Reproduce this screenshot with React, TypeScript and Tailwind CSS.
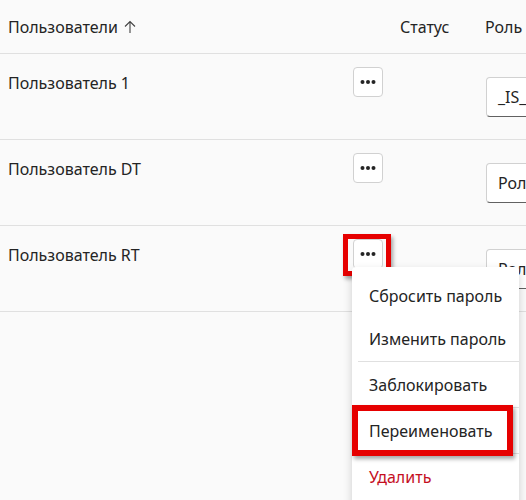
import React from "react";

const users = [
  { name: "Пользователь 1", role: "_IS_ADMIN" },
  { name: "Пользователь DT", role: "Роль DT" },
  { name: "Пользователь RT", role: "Роль RT" },
];

function Dots() {
  return (
    <svg width="16" height="6" viewBox="0 0 16 6" fill="#242424">
      <circle cx="2.5" cy="3" r="2" />
      <circle cx="8" cy="3" r="2" />
      <circle cx="13.5" cy="3" r="2" />
    </svg>
  );
}

function MoreButton({ marked }: { marked?: boolean }) {
  return (
    <div className="relative">
      <button className="w-[30px] h-[30px] flex items-center justify-center bg-white border border-[#d1d1d1] rounded-[4px]">
        <Dots />
      </button>
      {marked && (
        <div className="absolute left-[-10px] top-[-5px] w-[48px] h-[42px] border-[5px] border-[#e60000] shadow-[2px_3px_4px_rgba(0,0,0,0.35)]" />
      )}
    </div>
  );
}

function Menu() {
  const item = "h-[43px] flex items-center pl-[17px] text-[16px]";
  const divider = "h-px bg-[#e0e0e0] ml-[6px] my-[1px]";
  return (
    <div className="absolute left-[-1px] top-[28px] w-[167px] h-[240px] bg-white rounded-[4px] shadow-[0_4px_10px_rgba(0,0,0,0.18)] pt-[7px] z-10">
      <div className={item}>Сбросить пароль</div>
      <div className={item}>Изменить пароль</div>
      <div className={divider} />
      <div className={item}>Заблокировать</div>
      <div className={divider} />
      <div className="relative">
        <div className={item}>Переименовать</div>
        <div className="absolute left-0 top-[-4px] w-[161px] h-[51px] border-[6px] border-[#e60000] shadow-[2px_3px_4px_rgba(0,0,0,0.35)]" />
      </div>
      <div className={divider} />
      <div className={item + " text-[#c50f1f]"}>Удалить</div>
    </div>
  );
}

export default function App() {
  return (
    <div
      className="w-full h-[500px] overflow-hidden bg-[#fafafa] text-[#242424]"
      style={{ fontFamily: '"Noto Sans", "Open Sans", sans-serif' }}
    >
      <div className="w-[640px]">
        <div className="flex h-[54px] items-center border-b border-[#e0e0e0] text-[16px]">
          <div className="w-[392px] pl-2 flex items-center gap-[6px]">
            <span>Пользователи</span>
            <svg width="12" height="14" viewBox="0 0 12 14" fill="none" stroke="#424242" strokeWidth="1.1">
              <path d="M6 13V1.5M1 6.5L6 1.5l5 5" />
            </svg>
          </div>
          <div className="w-[85px] pl-2">Статус</div>
          <div className="pl-2">Роль</div>
        </div>
        {users.map((u, i) => (
          <div key={u.name} className="flex h-[86px] border-b border-[#e0e0e0] text-[16px]">
            <div className="w-[392px] pl-2 pr-[9px] flex justify-between items-start">
              <span className="mt-[17px]">{u.name}</span>
              <div className="mt-[13px] relative">
                <MoreButton marked={i === 2} />
                {i === 2 && <Menu />}
              </div>
            </div>
            <div className="w-[85px]" />
            <div className="pl-[9px] pt-[23px]">
              <div className="w-[140px] h-[40px] bg-white border border-[#d1d1d1] border-b-[#616161] rounded-[4px] flex items-center pl-[11px]">
                {u.role}
              </div>
            </div>
          </div>
        ))}
      </div>
    </div>
  );
}
